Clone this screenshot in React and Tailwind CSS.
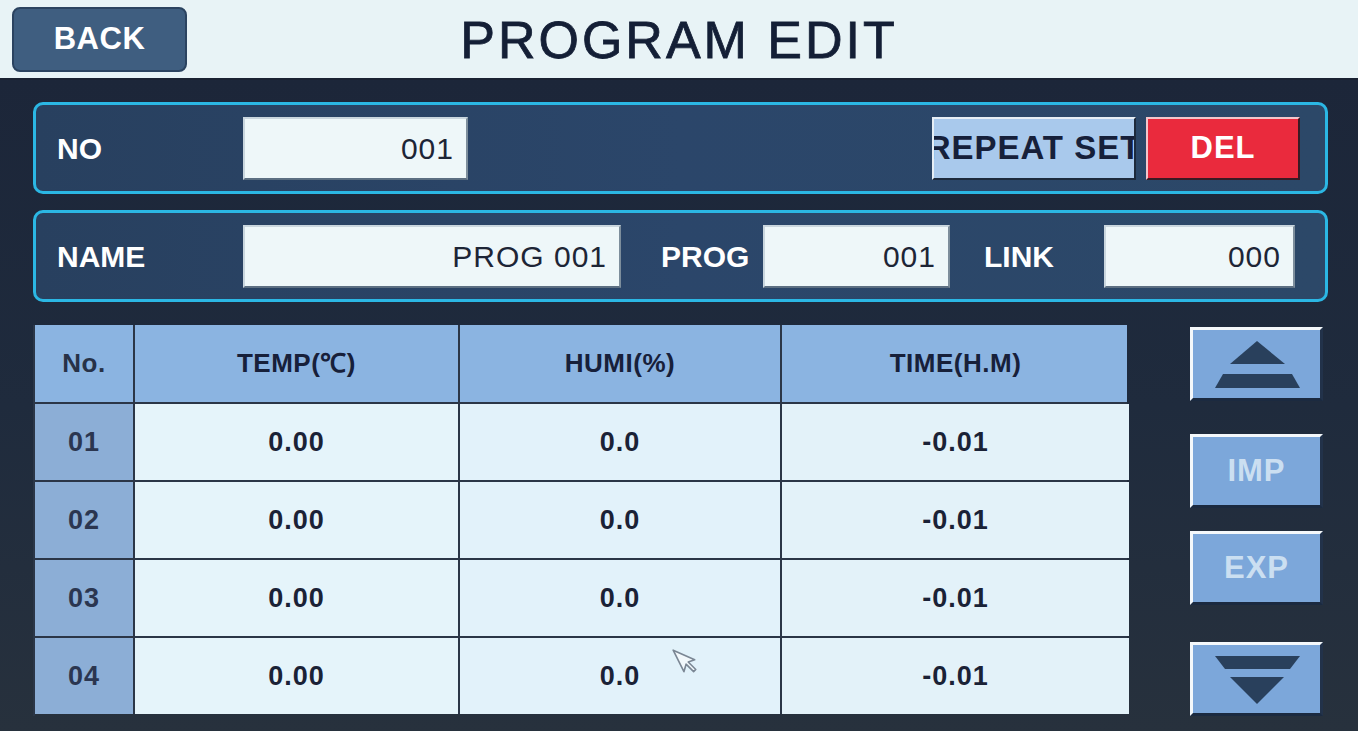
import React from "react";

function Field({ w, children }) {
  return (
    <div
      className={`${w} h-[63px] bg-[#eef7f9] border-t-2 border-l-2 border-[#c9d6de] border-b-2 border-r-2 border-b-[#5c6f82] border-r-[#7d8e9c] flex items-center justify-end pr-[12px] text-[30px] tracking-[1px] text-[#1d2536]`}
    >
      {children}
    </div>
  );
}

function SideBtn({ children, mt }) {
  return (
    <div
      className={`${mt} w-[133px] h-[74px] bg-[#7ca7da] border-t-[3px] border-l-[3px] border-t-[#f4f8fb] border-l-[#f4f8fb] border-b-[3px] border-r-[3px] border-b-[#1b2a40] border-r-[#22324a] flex items-center justify-center text-[31px] font-bold text-[#cbdff1] tracking-[1px]`}
    >
      {children}
    </div>
  );
}

export default function App() {
  const rows = ["01", "02", "03", "04"];
  return (
    <div className="font-['Liberation_Sans',Arial,sans-serif] w-[1358px] h-[731px] flex flex-col overflow-hidden bg-[#1f2a3a]">
      {/* Header */}
      <div className="h-[80px] bg-[#e8f3f6] flex items-center border-b-2 border-[#1a2232]">
        <div className="ml-[12px] w-[175px] h-[65px] rounded-[8px] bg-[#3f5e80] border-2 border-[#2b4360] flex items-center justify-center text-white font-bold text-[31px] tracking-[0.5px]">
          BACK
        </div>
        <div className="flex-1 text-center text-[52px] text-[#141f36] tracking-[3px] leading-none pt-[2px] [-webkit-text-stroke:0.8px_#141f36]">
          PROGRAM EDIT
        </div>
        <div className="w-[187px]" />
      </div>

      {/* Body */}
      <div className="flex-1 bg-gradient-to-b from-[#1c2639] via-[#1f2b3d] to-[#27313d] pl-[33px] pr-[30px] pt-[22px]">
        {/* Panel 1 */}
        <div className="h-[92px] rounded-[10px] border-[3px] border-[#2bb7e4] bg-gradient-to-r from-[#28405f] via-[#2b466a] to-[#2c4868] flex items-center pl-[21px] pr-[25px]">
          <div className="w-[186px] text-white font-bold text-[30px]">NO</div>
          <Field w="w-[225px]">001</Field>
          <div className="flex-1" />
          <div className="w-[204px] h-[63px] overflow-hidden bg-[#a9c9ec] border-t-2 border-l-2 border-[#e6eef5] border-b-2 border-r-2 border-b-[#1d2a3c] border-r-[#1d2a3c] flex items-center justify-center">
            <span className="whitespace-nowrap text-[33px] font-bold text-[#16203a] tracking-[1px]">REPEAT SET</span>
          </div>
          <div className="ml-[10px] w-[154px] h-[63px] bg-[#ea2a3d] border-t-2 border-l-2 border-[#f3c6cb] border-b-2 border-r-2 border-b-[#3a1a24] border-r-[#3a1a24] flex items-center justify-center text-white font-bold text-[31px] tracking-[1px]">
            DEL
          </div>
        </div>

        {/* Panel 2 */}
        <div className="mt-[16px] h-[92px] rounded-[10px] border-[3px] border-[#2bb7e4] bg-gradient-to-r from-[#28405f] via-[#2b466a] to-[#2c4868] flex items-center pl-[21px]">
          <div className="w-[186px] text-white font-bold text-[30px]">NAME</div>
          <Field w="w-[378px]">PROG 001</Field>
          <div className="ml-[40px] w-[102px] text-white font-bold text-[30px]">PROG</div>
          <Field w="w-[187px]">001</Field>
          <div className="ml-[34px] w-[120px] text-white font-bold text-[30px]">LINK</div>
          <Field w="w-[191px]">000</Field>
        </div>

        {/* Table + side buttons */}
        <div className="mt-[23px] flex">
          <div className="relative w-[1094px] border-l-2 border-[#2b3647]">
            <div className="grid grid-cols-[100px_325px_322px_347px] h-[77px] bg-[#8bb4e1] text-[#17203a] font-bold text-[26px] tracking-[0.5px]">
              <div className="flex items-center justify-center text-[#273248] border-r-2 border-[#2b3647]">No.</div>
              <div className="flex items-center justify-center border-r-2 border-[#2b3647]">TEMP(℃)</div>
              <div className="flex items-center justify-center border-r-2 border-[#2b3647]">HUMI(%)</div>
              <div className="flex items-center justify-center">TIME(H.M)</div>
            </div>
            {rows.map((r) => (
              <div
                key={r}
                className="grid grid-cols-[100px_325px_322px_347px] h-[78px] border-t-2 border-[#2b3647] text-[27px] font-bold tracking-[1px] text-[#1a2236]"
              >
                <div className="flex items-center justify-center bg-[#8caed6] text-[#2b3650] border-r-2 border-[#2b3647]">{r}</div>
                <div className="flex items-center justify-center bg-[#e5f4fa] border-r-2 border-[#2b3647]">0.00</div>
                <div className="flex items-center justify-center bg-[#e2f2fa] border-r-2 border-[#2b3647]">0.0</div>
                <div className="flex items-center justify-center bg-[#e3f2f9]">-0.01</div>
              </div>
            ))}
            {/* mouse cursor */}
            <svg
              className="absolute left-[636px] top-[323px]"
              width="28"
              height="28"
              viewBox="0 0 26 26"
            >
              <path
                d="M2 2 L12 22 L14 15 L21 22 L23 20 L16 13 L22 11 Z"
                fill="#f2f8fb"
                stroke="#7b8794"
                strokeWidth="1.5"
                strokeLinejoin="round"
              />
            </svg>
          </div>

          <div className="ml-[63px] flex flex-col">
            <SideBtn mt="mt-[2px]">
              <svg width="133" height="74" viewBox="0 0 133 74" className="-m-[3px]">
                <polygon points="67,14 95,37 40,37" fill="#29405c" />
                <polygon points="33,47 102,47 110,61 25,61" fill="#29405c" />
              </svg>
            </SideBtn>
            <SideBtn mt="mt-[33px]">IMP</SideBtn>
            <SideBtn mt="mt-[23px]">EXP</SideBtn>
            <SideBtn mt="mt-[37px]">
              <svg width="133" height="74" viewBox="0 0 133 74" className="-m-[3px]">
                <polygon points="25,14 110,14 100,27 35,27" fill="#29405c" />
                <polygon points="40,35 94,35 67,62" fill="#29405c" />
              </svg>
            </SideBtn>
          </div>
        </div>
      </div>
    </div>
  );
}
